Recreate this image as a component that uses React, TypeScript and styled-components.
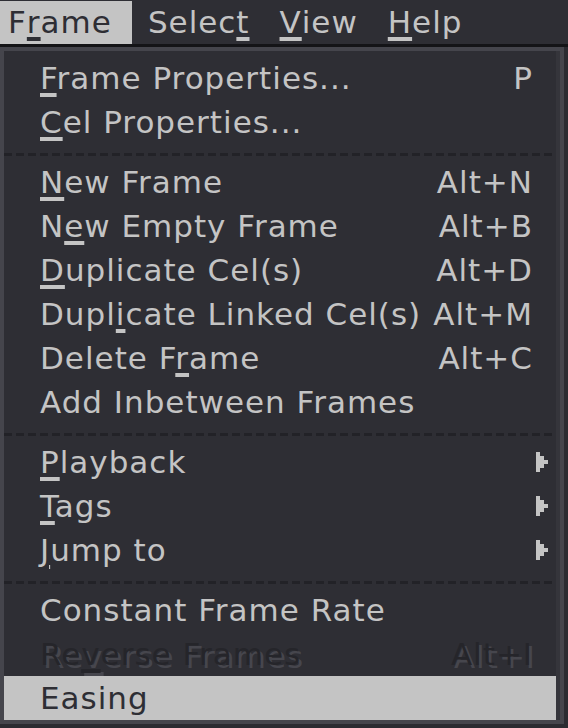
import * as React from 'react'
import styled, { createGlobalStyle } from 'styled-components'

const GlobalStyle = createGlobalStyle`
  html, body {
    margin: 0;
    padding: 0;
    background: #2b2b31;
  }
  body {
    font-family: "DejaVu Sans", "Liberation Sans", sans-serif;
  }
`

const Page = styled.div`
  width: 568px;
  height: 728px;
  overflow: hidden;
  background: #2b2b31;
  color: #c4c4c4;
  font-size: 31px;
  letter-spacing: 1px;
  line-height: 1;
`

const MenuBar = styled.div`
  display: flex;
  height: 43px;
  padding-top: 1px;
  background: #2e2e34;
  border-bottom: 3px solid #141417;
`

const BarItem = styled.div<{ $active?: boolean; $first?: boolean }>`
  display: flex;
  align-items: center;
  padding: 0 ${p => (p.$first ? 20 : 14)}px 0 ${p => (p.$first ? 8 : 16)}px;
  background: ${p => (p.$active ? '#c4c4c4' : 'transparent')};
  color: ${p => (p.$active ? '#2e2e34' : '#c4c4c4')};
`

const Popup = styled.div`
  width: 556px;
  border: 4px solid #45454c;
  background: #2e2e34;
`

const Inner = styled.div`
  border-right: 4px solid #35353b;
  padding-top: 5px;
`

const Row = styled.div<{ $selected?: boolean; $disabled?: boolean }>`
  display: grid;
  grid-template-columns: 1fr auto 24px;
  align-items: center;
  height: 44px;
  padding-left: 36px;
  background: ${p => (p.$selected ? '#c4c4c4' : 'transparent')};
  color: ${p => (p.$selected ? '#2e2e34' : p.$disabled ? '#25252a' : '#c4c4c4')};
  text-shadow: ${p => (p.$disabled ? '3px 3px 0 #46464d' : 'none')};
  white-space: nowrap;
`

const Label = styled.span``

const Shortcut = styled.span`
  text-align: right;
  margin-right: -1px;
`

const Mnemonic = styled.span`
  text-decoration: underline;
  text-decoration-thickness: 4px;
  text-underline-offset: 4px;
`

const ArrowBox = styled.span`
  display: flex;
  padding-left: 4px;
`

const Separator = styled.div`
  height: 16px;
  display: flex;
  align-items: flex-start;
  &::after {
    content: '';
    display: block;
    width: 100%;
    height: 3px;
    margin-top: 9px;
    background: repeating-linear-gradient(to right, #222227 0 8px, transparent 8px 12px);
  }
`

const SubArrow = () => (
  <svg width="12" height="20" viewBox="0 0 12 20" fill="#c4c4c4">
    <rect x="0" y="0" width="4" height="20" />
    <rect x="4" y="4" width="4" height="12" />
    <rect x="8" y="8" width="4" height="4" />
  </svg>
)

type Item =
  | { sep: true }
  | {
      sep?: false
      label: string
      mn?: number
      shortcut?: string
      sub?: boolean
      disabled?: boolean
      selected?: boolean
    }

const items: Item[] = [
  { label: 'Frame Properties...', mn: 0, shortcut: 'P' },
  { label: 'Cel Properties...', mn: 0 },
  { sep: true },
  { label: 'New Frame', mn: 0, shortcut: 'Alt+N' },
  { label: 'New Empty Frame', mn: 1, shortcut: 'Alt+B' },
  { label: 'Duplicate Cel(s)', mn: 0, shortcut: 'Alt+D' },
  { label: 'Duplicate Linked Cel(s)', mn: 4, shortcut: 'Alt+M' },
  { label: 'Delete Frame', mn: 8, shortcut: 'Alt+C' },
  { label: 'Add Inbetween Frames' },
  { sep: true },
  { label: 'Playback', mn: 0, sub: true },
  { label: 'Tags', mn: 0, sub: true },
  { label: 'Jump to', mn: 0, sub: true },
  { sep: true },
  { label: 'Constant Frame Rate' },
  { label: 'Reverse Frames', mn: 2, shortcut: 'Alt+I', disabled: true },
  { label: 'Easing', selected: true },
]

const withMnemonic = (text: string, mn?: number) => {
  if (mn === undefined) return text
  return (
    <>
      {text.slice(0, mn)}
      <Mnemonic>{text[mn]}</Mnemonic>
      {text.slice(mn + 1)}
    </>
  )
}

const bar = [
  { label: 'Frame', mn: 1, active: true },
  { label: 'Select', mn: 5 },
  { label: 'View', mn: 0 },
  { label: 'Help', mn: 0 },
]

export default function App() {
  return (
    <Page>
      <GlobalStyle />
      <MenuBar>
        {bar.map((b, i) => (
          <BarItem key={b.label} $active={b.active} $first={i === 0}>
            {withMnemonic(b.label, b.mn)}
          </BarItem>
        ))}
      </MenuBar>
      <Popup>
        <Inner>
          {items.map((it, i) =>
            it.sep ? (
              <Separator key={i} />
            ) : (
              <Row key={i} $selected={it.selected} $disabled={it.disabled}>
                <Label>{withMnemonic(it.label, it.mn)}</Label>
                <Shortcut>{it.shortcut}</Shortcut>
                <ArrowBox>{it.sub && <SubArrow />}</ArrowBox>
              </Row>
            )
          )}
        </Inner>
      </Popup>
    </Page>
  )
}
